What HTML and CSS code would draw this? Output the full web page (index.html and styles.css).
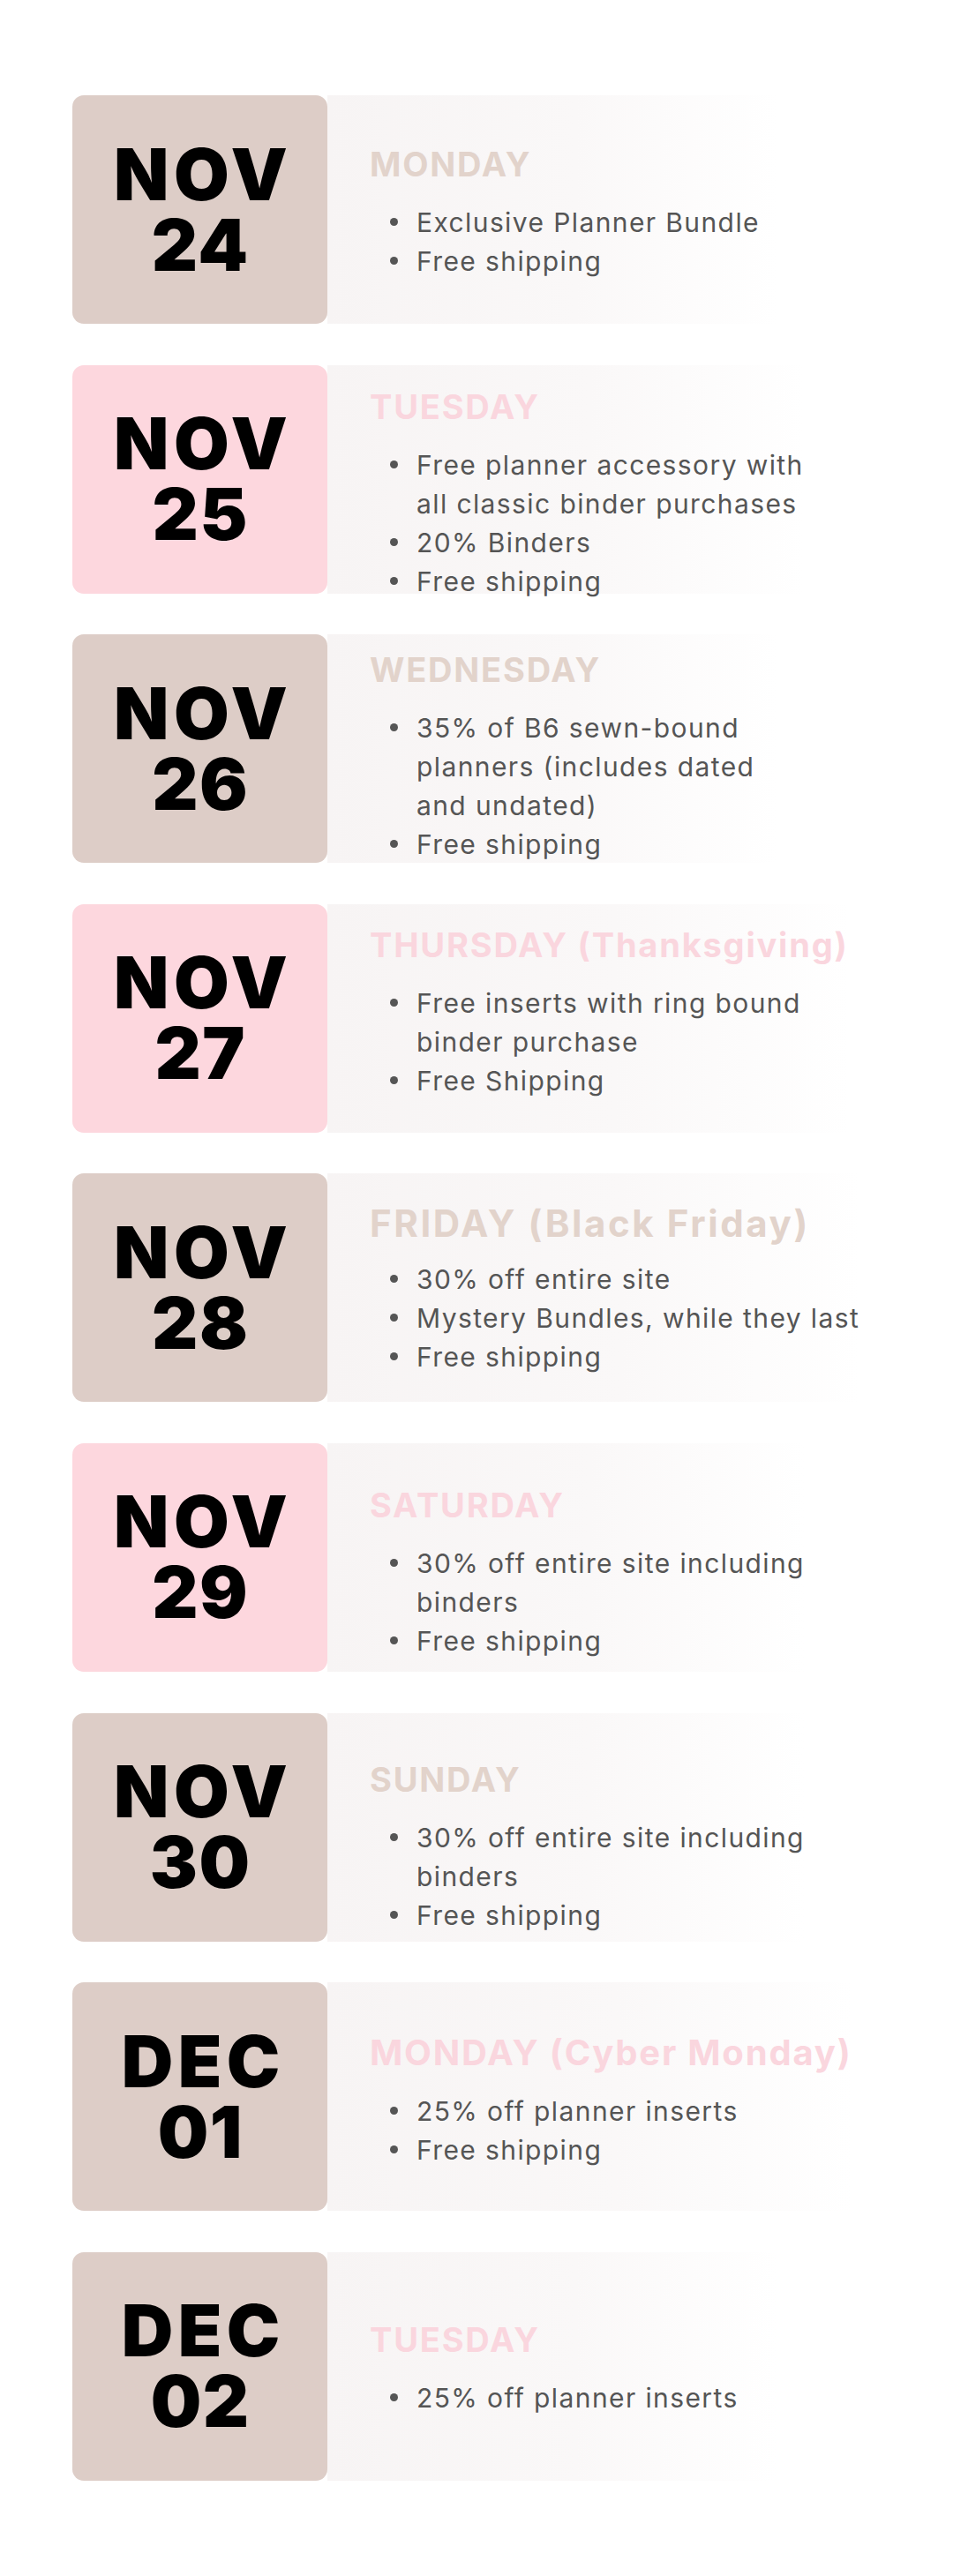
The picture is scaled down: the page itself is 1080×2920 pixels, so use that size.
FILE: index.html
```html
<!DOCTYPE html>
<html lang="en">
<head>
<meta charset="utf-8">
<title>Holiday Sale Schedule</title>
<link rel="stylesheet" href="styles.css">
</head>
<body>
<main class="schedule">
  <section class="day d1">
    <div class="date beige"><span class="mon">NOV</span><span class="num">24</span></div>
    <div class="info">
      <h2 class="title t-beige">MONDAY</h2>
      <ul class="deals">
        <li>Exclusive Planner Bundle</li>
        <li>Free shipping</li>
      </ul>
    </div>
  </section>
  <section class="day d2">
    <div class="date pink"><span class="mon">NOV</span><span class="num">25</span></div>
    <div class="info">
      <h2 class="title t-pink">TUESDAY</h2>
      <ul class="deals">
        <li>Free planner accessory with<br>all classic binder purchases</li>
        <li>20% Binders</li>
        <li>Free shipping</li>
      </ul>
    </div>
  </section>
  <section class="day d3">
    <div class="date beige"><span class="mon">NOV</span><span class="num">26</span></div>
    <div class="info">
      <h2 class="title t-beige">WEDNESDAY</h2>
      <ul class="deals">
        <li>35% of B6 sewn-bound<br>planners (includes dated<br>and undated)</li>
        <li>Free shipping</li>
      </ul>
    </div>
  </section>
  <section class="day d4">
    <div class="date pink"><span class="mon">NOV</span><span class="num">27</span></div>
    <div class="info">
      <h2 class="title t-pink">THURSDAY (Thanksgiving)</h2>
      <ul class="deals">
        <li>Free inserts with ring bound<br>binder purchase</li>
        <li>Free Shipping</li>
      </ul>
    </div>
  </section>
  <section class="day d5">
    <div class="date beige"><span class="mon">NOV</span><span class="num">28</span></div>
    <div class="info">
      <h2 class="title t-beige big">FRIDAY (Black Friday)</h2>
      <ul class="deals">
        <li>30% off entire site</li>
        <li>Mystery Bundles, while they last</li>
        <li>Free shipping</li>
      </ul>
    </div>
  </section>
  <section class="day d6">
    <div class="date pink"><span class="mon">NOV</span><span class="num">29</span></div>
    <div class="info">
      <h2 class="title t-pink">SATURDAY</h2>
      <ul class="deals">
        <li>30% off entire site including<br>binders</li>
        <li>Free shipping</li>
      </ul>
    </div>
  </section>
  <section class="day d7">
    <div class="date beige"><span class="mon">NOV</span><span class="num">30</span></div>
    <div class="info">
      <h2 class="title t-beige">SUNDAY</h2>
      <ul class="deals">
        <li>30% off entire site including<br>binders</li>
        <li>Free shipping</li>
      </ul>
    </div>
  </section>
  <section class="day d8">
    <div class="date beige"><span class="mon">DEC</span><span class="num">01</span></div>
    <div class="info">
      <h2 class="title t-pink mid">MONDAY (Cyber Monday)</h2>
      <ul class="deals">
        <li>25% off planner inserts</li>
        <li>Free shipping</li>
      </ul>
    </div>
  </section>
  <section class="day d9">
    <div class="date beige"><span class="mon">DEC</span><span class="num">02</span></div>
    <div class="info">
      <h2 class="title t-pink">TUESDAY</h2>
      <ul class="deals">
        <li>25% off planner inserts</li>
      </ul>
    </div>
  </section>
</main>
</body>
</html>
```
FILE: styles.css
```css
* { box-sizing: border-box; }

html, body {
  margin: 0;
  padding: 0;
  background: #ffffff;
}

.schedule {
  display: flex;
  flex-direction: column;
  gap: 46.6px;
  padding: 108px 0 108px 82px;
}

.day {
  display: flex;
  height: 259px;
}

.date {
  flex: 0 0 289px;
  border-radius: 13px;
  display: flex;
  flex-direction: column;
  align-items: center;
  justify-content: center;
  font-family: Inter, "Liberation Sans", sans-serif;
  font-weight: 900;
  font-size: 81px;
  line-height: 80px;
  color: #000;
}

.date .mon {
  letter-spacing: 5.5px;
  margin-right: -5.5px;
  padding-left: 2px;
}

.date .num {
  letter-spacing: 1.5px;
  margin-right: -1.5px;
}

.date.beige { background: #ddcdc7; }
.date.pink { background: #fdd7de; }

.info {
  flex: 0 0 510px;
  background: linear-gradient(90deg, #f7f4f4 0%, #faf8f8 55%, #ffffff 100%);
  padding-left: 48px;
  overflow: visible;
}

.title {
  margin: 0;
  font-family: Inter, "Liberation Sans", sans-serif;
  font-weight: 700;
  font-size: 38px;
  line-height: 38px;
  letter-spacing: 1.8px;
  white-space: nowrap;
}

.title.big {
  font-size: 42px;
  line-height: 41px;
  letter-spacing: 2.6px;
}

.title.mid {
  font-size: 40px;
  line-height: 39px;
}

.t-beige { color: #e2d3cb; }
.t-pink { color: #fad6de; }

.deals {
  list-style: none;
  margin: 25px 0 0 0;
  padding: 0 0 0 53px;
  font-family: Inter, "Liberation Sans", sans-serif;
  font-size: 30px;
  line-height: 44px;
  letter-spacing: 1.4px;
  color: #555555;
  white-space: nowrap;
}

.big + .deals { margin-top: 21px; }

.deals li {
  position: relative;
}

.deals li::before {
  content: "";
  position: absolute;
  left: -30px;
  top: 17px;
  width: 9px;
  height: 9px;
  border-radius: 50%;
  background: #555555;
}

.d1 .info { padding-top: 59px; }
.d2 .info { padding-top: 28px; }
.d3 .info { padding-top: 21px; }
.d4 .info { padding-top: 27px; }
.d5 .info { padding-top: 36px; }
.d6 .info { padding-top: 51px; }
.d7 .info { padding-top: 56px; }
.d8 .info { padding-top: 60px; }
.d9 .info { padding-top: 80px; }
```
